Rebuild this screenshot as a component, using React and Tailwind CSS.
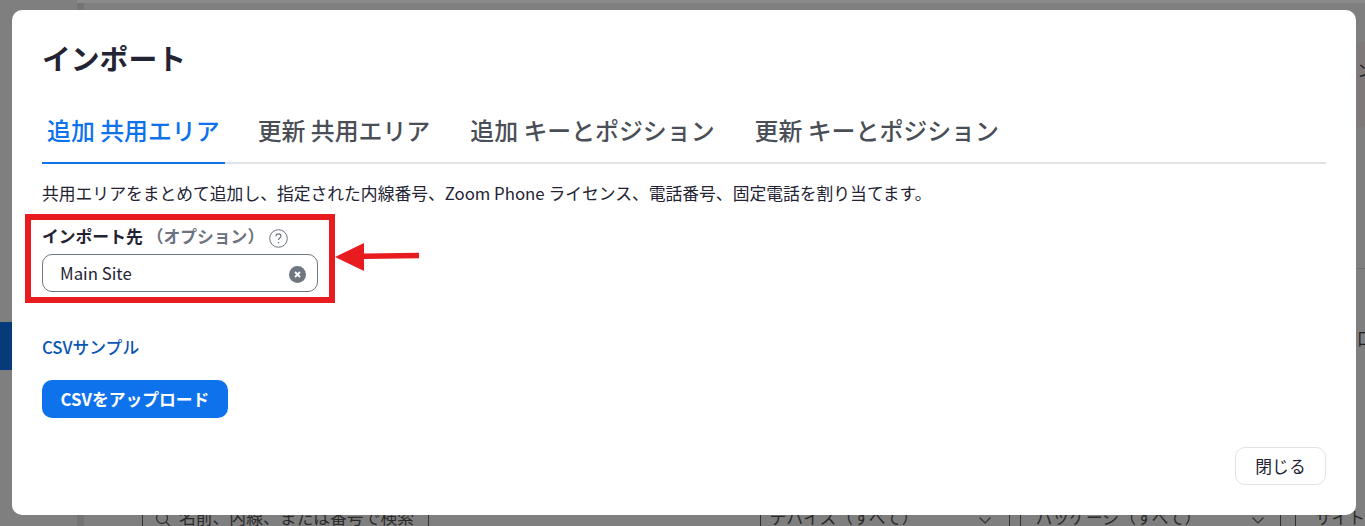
const TABS = ['追加 共用エリア', '更新 共用エリア', '追加 キーとポジション', '更新 キーとポジション']

function Chevron() {
  return (
    <svg className="shrink-0" width="12" height="7" viewBox="0 0 12 7" fill="none" stroke="#333" strokeWidth="1.2">
      <path d="M.5.5 6 6 11.5.5" />
    </svg>
  )
}

// page behind the dialog, mostly hidden by the overlay
function Backdrop() {
  return (
    <div className="h-full flex bg-[#7f7f7f] text-[#1f1f1f]">
      <div className="w-[84px] shrink-0 flex flex-col border-r-[7px] border-[#747474]">
        <div className="mt-[322px] h-[48px] bg-[#073a78]" />
      </div>
      <div className="flex-1 flex flex-col min-w-0">
        <div className="h-[3px] -ml-[7px] bg-[#8a8a8a]" />
        <div className="flex-1 flex flex-col items-start pl-[1273px] overflow-hidden">
          <div className="w-full h-[85px] mt-[39px] bg-[#80797a] pt-[16px]">
            <span className="text-[16.8px] leading-6 whitespace-nowrap">ン</span>
          </div>
          <div className="w-full h-px mt-[141px] bg-[#6f6f6f]" />
          <span className="mt-[57px] text-[16.8px] leading-6 whitespace-nowrap">口</span>
        </div>
        <div className="h-[23px] flex items-start pl-[58px] pt-[2px] text-[16.8px] leading-6 text-[#2a2a2a]">
          <div className="w-[288px] h-[23px] flex border-x border-[#333] pl-[12px] gap-[8px] items-start">
            <svg className="mt-[6px] shrink-0" width="16" height="16" viewBox="0 0 16 16" fill="none" stroke="#333" strokeWidth="1.3">
              <circle cx="7" cy="7" r="5.5" />
              <path d="M11 11l4 4" />
            </svg>
            <span className="whitespace-nowrap">名前、内線、または番号で検索</span>
          </div>
          <div className="ml-[331px] w-[251px] h-[23px] flex border-x border-[#333] pl-[9px] pr-[18px] items-start justify-between">
            <span className="whitespace-nowrap">デバイス（すべて）</span>
            <div className="mt-[12px]"><Chevron /></div>
          </div>
          <div className="ml-[10px] w-[262px] h-[23px] flex border-x border-[#333] pl-[15px] pr-[16px] items-start justify-between">
            <span className="whitespace-nowrap">パッケージ（すべて）</span>
            <div className="mt-[12px]"><Chevron /></div>
          </div>
          <div className="ml-[14px] h-[23px] pl-[19px] flex items-start whitespace-nowrap border-l border-[#333]">サイト</div>
        </div>
      </div>
    </div>
  )
}

function ImportDialog() {
  return (
    <div className="absolute left-[12px] top-[10px] w-[1344px] h-[505px] bg-white rounded-[10px] px-[30px] pt-[29px] flex flex-col">
      <h1 className="text-[28.8px] leading-[38px] font-bold text-[#232333]">インポート</h1>

      <div className="mt-[33px] flex gap-[30px] border-b-2 border-[#e0e4e8]">
        {TABS.map((tab, i) => (
          <div
            key={tab}
            className={`px-[5px] h-[54px] -mb-[2px] flex items-start pt-[2px] text-[23.9px] leading-9 font-medium border-b-2 ${i === 0 ? '-mr-[2px] text-[#0e72ed] border-[#0e72ed]' : 'text-[#4a4f57] border-transparent'}`}
          >
            {tab}
          </div>
        ))}
      </div>

      <p className="mt-[17px] text-[16.8px] leading-6 text-[#232333]">
        共用エリアをまとめて追加し、指定された内線番号、Zoom Phone ライセンス、電話番号、固定電話を割り当てます。
      </p>

      <div className="mt-[20px] flex items-center h-6 text-[16.8px] font-bold text-[#232333]">
        <span>インポート先</span>
        <span className="ml-[4px] text-[#6e7280]">（オプション）</span>
        <svg className="ml-[5px] mt-[3px]" width="19" height="19" viewBox="0 0 19 19" fill="none" stroke="#6e7680">
          <circle cx="9.5" cy="9.5" r="8.8" />
          <path d="M7 7.3c0-1.5 1.1-2.4 2.5-2.4s2.5.9 2.5 2.2c0 1.9-2.5 1.9-2.5 3.9" strokeWidth="1.2" />
          <circle cx="9.5" cy="13.7" r="0.8" fill="#6e7680" stroke="none" />
        </svg>
      </div>

      <div className="mt-[5px] w-[276px] h-[38px] border border-[#6e7680] rounded-[10px] flex items-center justify-between pl-[17px] pr-[11px] text-[16.8px] text-[#232333]">
        <span className="pt-px">Main Site</span>
        <svg className="mt-[2px]" width="17" height="17" viewBox="0 0 17 17">
          <circle cx="8.5" cy="8.5" r="8.5" fill="#6e7680" />
          <path d="M6 6l5 5M11 6l-5 5" stroke="#fff" strokeWidth="1.8" />
        </svg>
      </div>

      <a className="mt-[43px] text-[16.8px] leading-6 font-medium text-[#0956b5]">CSVサンプル</a>

      <button className="mt-[21px] self-start h-[38px] w-[186px] pt-px rounded-[10px] bg-[#0e72ed] text-white text-[16.8px] font-bold">
        CSVをアップロード
      </button>

      <button className="mt-[29px] self-end h-[38px] w-[91px] pt-px rounded-[10px] border border-[#dfe3e8] bg-white text-[16.8px] text-[#232333]">
        閉じる
      </button>
    </div>
  )
}

export default function App() {
  return (
    <div className="relative h-[526px] overflow-hidden font-['Noto_Sans_CJK_JP','Noto_Sans',sans-serif]">
      <Backdrop />
      <ImportDialog />
      {/* red annotation drawn over the screenshot */}
      <div className="absolute left-[25px] top-[214px] w-[310px] h-[89px] border-[6px] border-[#e81c1f]" />
      <svg className="absolute left-[334px] top-[242px]" width="86" height="30" viewBox="0 0 86 30" fill="#e81c1f">
        <path d="M1 15 30 1v10.5l55-.7v5.4l-55 .8V29z" />
      </svg>
    </div>
  )
}
